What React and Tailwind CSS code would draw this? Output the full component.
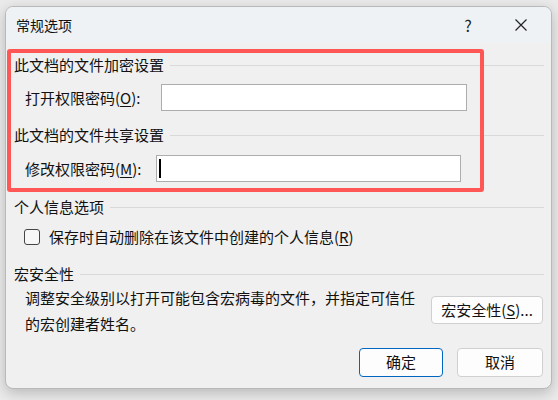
import React from 'react'

const font = { fontFamily: '"Noto Sans CJK SC", "Noto Sans", sans-serif' }

function Heading({ text, className = '' }) {
  return (
    <div className={`flex items-center h-[20px] pl-[8px] pr-[7px] ${className}`}>
      <span className="text-[15px] leading-[20px] text-[#111]">{text}</span>
      <div className="flex-1 h-px bg-[#d9d9d9] ml-[6px]" />
    </div>
  )
}

function Btn({ children, primary, className = '' }) {
  return (
    <button
      className={`flex items-center justify-center rounded-[4px] bg-[#fdfdfd] text-[15px] text-[#111] ${
        primary ? 'border border-[#0067c0]' : 'border border-[#d0d0d0]'
      } ${className}`}
    >
      {children}
    </button>
  )
}

export default function App() {
  return (
    <div className="w-[558px] h-[400px] bg-[#ebebeb] overflow-hidden pt-[6px] pl-[5px]" style={font}>
      <div className="w-[547px] h-[383px] rounded-[8px] border border-[#b9b9b9] bg-[#f0f0f0] overflow-hidden shadow-[0_4px_14px_rgba(0,0,0,0.22)] flex flex-col">
        {/* Title bar */}
        <div className="h-[36px] shrink-0 bg-[#eef2f5] flex items-center pl-[10px]">
          <span className="text-[14px] text-[#111]">常规选项</span>
          <span className="ml-auto text-[16px] text-[#222] w-[20px] text-center mr-[37px]">?</span>
          <svg width="12" height="12" viewBox="0 0 12 12" className="mr-[24px]">
            <path d="M0.5 0.5 L11.5 11.5 M11.5 0.5 L0.5 11.5" stroke="#222" strokeWidth="1.2" />
          </svg>
        </div>

        {/* Body */}
        <div className="relative flex-1 flex flex-col">
          <Heading text="此文档的文件加密设置" className="mt-[12px]" />
          <div className="flex items-center mt-[9px] pl-[19px]">
            <span className="w-[136px] text-[15px] text-[#111] leading-[20px]">
              打开权限密码(<span className="underline underline-offset-2">O</span>):
            </span>
            <div className="w-[306px] h-[27px] bg-white border border-[#adadad]" />
          </div>

          <Heading text="此文档的文件共享设置" className="mt-[14px]" />
          <div className="flex items-center mt-[10px] pl-[19px]">
            <span className="w-[131px] text-[15px] text-[#111] leading-[20px]">
              修改权限密码(<span className="underline underline-offset-2">M</span>):
            </span>
            <div className="w-[305px] h-[27px] bg-white border border-[#adadad] flex items-center">
              <div className="w-[2px] h-[19px] bg-black ml-[2px]" />
            </div>
          </div>

          <Heading text="个人信息选项" className="mt-[15px]" />
          <div className="flex items-center mt-[10px] pl-[18px] h-[20px]">
            <div className="w-[16px] h-[16px] rounded-[3px] border border-[#444] bg-[#f7f7f7]" />
            <span className="ml-[9px] text-[15px] text-[#111] leading-[20px]">
              保存时自动删除在该文件中创建的个人信息(<span className="underline underline-offset-2">R</span>)
            </span>
          </div>

          <Heading text="宏安全性" className="mt-[17px]" />
          <div className="flex items-start mt-[1px] pl-[19px]">
            <p className="w-[400px] text-[15px] leading-[26px] text-[#111]">
              调整安全级别以打开可能包含宏病毒的文件，并指定可信任的宏创建者姓名。
            </p>
            <Btn className="ml-[6px] mt-[11px] w-[112px] h-[28px]">
              宏安全性(<span className="underline underline-offset-2">S</span>)...
            </Btn>
          </div>

          <div className="flex justify-end mt-[11px] pr-[8px]">
            <Btn primary className="w-[84px] h-[29px]">确定</Btn>
            <Btn className="ml-[14px] w-[86px] h-[29px]">取消</Btn>
          </div>

          {/* red annotation overlay */}
          <div className="absolute left-[1px] top-[6px] w-[477px] h-[143px] border-[4px] border-[#ff5656] rounded-[3px]" />
        </div>
      </div>
    </div>
  )
}
